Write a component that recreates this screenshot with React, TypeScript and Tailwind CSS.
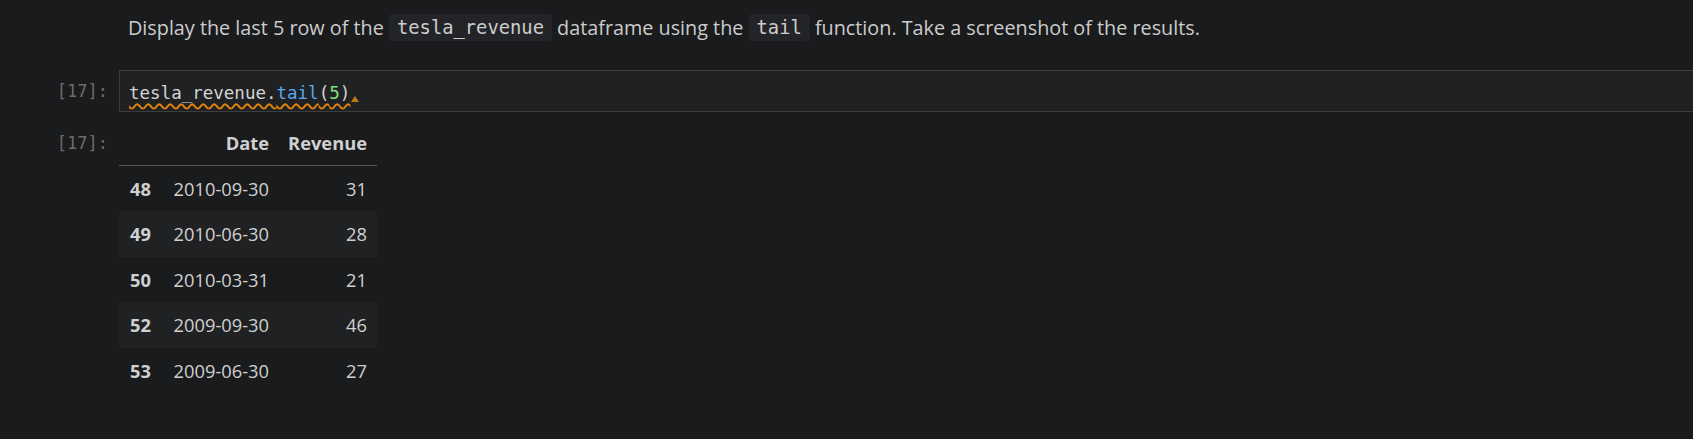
import React from "react";

const rows = [
  { i: "48", d: "2010-09-30", r: "31" },
  { i: "49", d: "2010-06-30", r: "28" },
  { i: "50", d: "2010-03-31", r: "21" },
  { i: "52", d: "2009-09-30", r: "46" },
  { i: "53", d: "2009-06-30", r: "27" },
];

export default function App() {
  const sans = "font-['Open_Sans','Noto_Sans',sans-serif]";
  const mono = "font-['DejaVu_Sans_Mono','Liberation_Mono',monospace]";
  return (
    <div className={`w-full h-[439px] bg-[#1a1b1d] text-[#cccccc] overflow-hidden ${sans}`}>
      {/* markdown cell */}
      <div className="flex h-[70px]">
        <div className="w-[128px] shrink-0" />
        <div className="pt-[14px] text-[19.8px] leading-[27px] whitespace-nowrap">
          Display the last 5 row of the{" "}
          <span className={`inline-block h-[27px] px-[8px] bg-[#232427] rounded-[3px] text-[18.8px] leading-[27px] align-top ${mono}`}>
            tesla_revenue
          </span>{" "}
          dataframe using the{" "}
          <span className={`inline-block h-[27px] px-[8px] bg-[#232427] rounded-[3px] text-[18.8px] leading-[27px] align-top ${mono}`}>
            tail
          </span>{" "}
          function. Take a screenshot of the results.
        </div>
      </div>

      {/* input cell */}
      <div className="flex h-[42px]">
        <div className={`w-[119px] shrink-0 flex items-center justify-end pr-[11px] pt-[2px] text-[17px] text-[#6b6b6b] ${mono}`}>
          [17]:
        </div>
        <div className="flex-1 flex items-center bg-[#202123] border-y border-l border-[#3c3c3c] pl-[9px] pt-[3px]">
          <span className={`text-[17.5px] leading-[24px] ${mono} underline decoration-wavy decoration-[#e5850b] decoration-[1.5px] underline-offset-[4px]`}>
            <span className="text-[#d4d4d4]">tesla_revenue.</span>
            <span className="text-[#5aa9ee]">tail</span>
            <span className="text-[#d4d4d4]">(</span>
            <span className="text-[#7ee07a]">5</span>
            <span className="text-[#d4d4d4]">)</span>
          </span>
          <svg width="8" height="6" viewBox="0 0 8 6" className="ml-[1px] mt-[12px]">
            <path d="M4 0 L8 6 L0 6 Z" fill="#c07a10" />
          </svg>
        </div>
      </div>

      {/* output */}
      <div className="flex pt-[8px]">
        <div className={`w-[119px] shrink-0 flex justify-end pr-[11px] pt-[11px] text-[17px] leading-[24px] text-[#6b6b6b] ${mono}`}>
          [17]:
        </div>
        <div className="text-[18.3px] text-[#d0d0d0]">
          <div className="flex h-[46px] items-center border-b border-[#555555] font-bold">
            <div className="w-[42px]" />
            <div className="w-[118px] text-right pr-[10px]">Date</div>
            <div className="w-[98px] text-right pr-[10px]">Revenue</div>
          </div>
          {rows.map((row, k) => (
            <div
              key={row.i}
              className={`flex h-[45.4px] items-center ${k % 2 === 1 ? "bg-[#202123]" : ""}`}
            >
              <div className="w-[42px] text-right pr-[10px] font-bold">{row.i}</div>
              <div className="w-[118px] text-right pr-[10px]">{row.d}</div>
              <div className="w-[98px] text-right pr-[10px]">{row.r}</div>
            </div>
          ))}
        </div>
      </div>
    </div>
  );
}
